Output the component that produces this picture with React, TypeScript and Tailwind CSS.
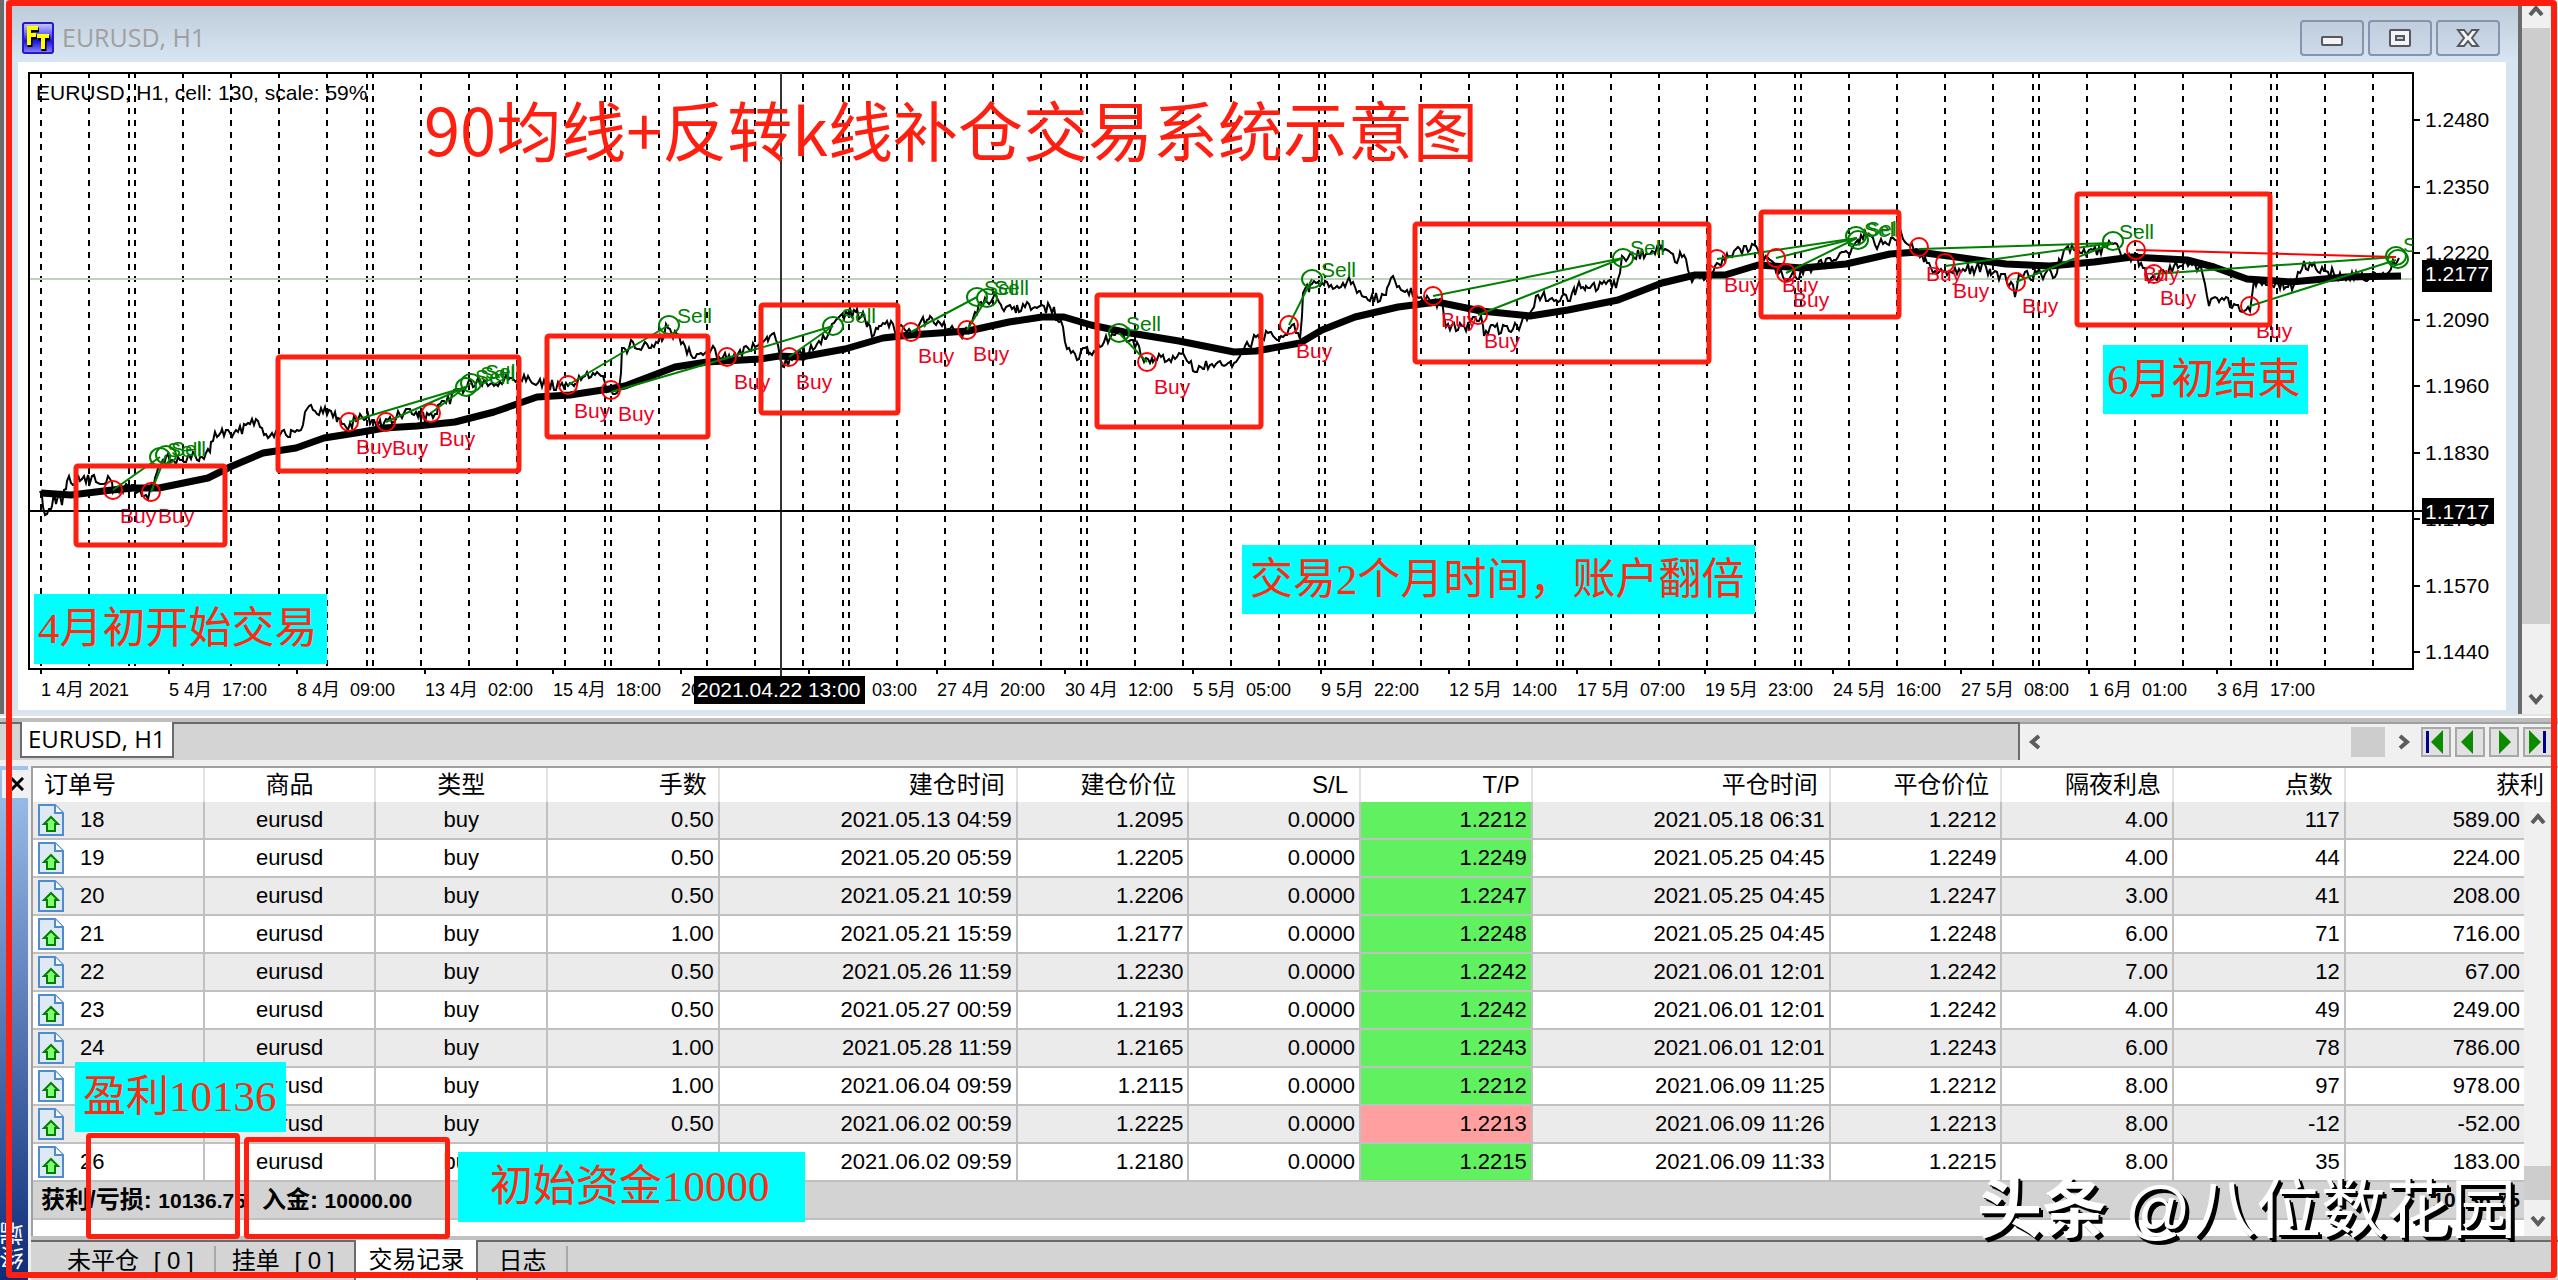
import type { ReactNode } from 'react';

type Point = [number, number];

const COLUMNS = [
  { label: '订单号', width: 'w-[6.8%]', align: 'text-left' },
  { label: '商品', width: 'w-[6.8%]', align: 'text-center' },
  { label: '类型', width: 'w-[6.8%]', align: 'text-center' },
  { label: '手数', width: 'w-[6.8%]', align: 'text-right' },
  { label: '建仓时间', width: 'w-[11.8%]', align: 'text-right' },
  { label: '建仓价位', width: 'w-[6.8%]', align: 'text-right' },
  { label: 'S/L', width: 'w-[6.8%]', align: 'text-right' },
  { label: 'T/P', width: 'w-[6.8%]', align: 'text-right' },
  { label: '平仓时间', width: 'w-[11.8%]', align: 'text-right' },
  { label: '平仓价位', width: 'w-[6.8%]', align: 'text-right' },
  { label: '隔夜利息', width: 'w-[6.8%]', align: 'text-right' },
  { label: '点数', width: 'w-[6.8%]', align: 'text-right' },
];

const ORDERS = [
  ['18', 'eurusd', 'buy', '0.50', '2021.05.13 04:59', '1.2095', '0.0000', '1.2212', '2021.05.18 06:31', '1.2212', '4.00', '117', '589.00'],
  ['19', 'eurusd', 'buy', '0.50', '2021.05.20 05:59', '1.2205', '0.0000', '1.2249', '2021.05.25 04:45', '1.2249', '4.00', '44', '224.00'],
  ['20', 'eurusd', 'buy', '0.50', '2021.05.21 10:59', '1.2206', '0.0000', '1.2247', '2021.05.25 04:45', '1.2247', '3.00', '41', '208.00'],
  ['21', 'eurusd', 'buy', '1.00', '2021.05.21 15:59', '1.2177', '0.0000', '1.2248', '2021.05.25 04:45', '1.2248', '6.00', '71', '716.00'],
  ['22', 'eurusd', 'buy', '0.50', '2021.05.26 11:59', '1.2230', '0.0000', '1.2242', '2021.06.01 12:01', '1.2242', '7.00', '12', '67.00'],
  ['23', 'eurusd', 'buy', '0.50', '2021.05.27 00:59', '1.2193', '0.0000', '1.2242', '2021.06.01 12:01', '1.2242', '4.00', '49', '249.00'],
  ['24', 'eurusd', 'buy', '1.00', '2021.05.28 11:59', '1.2165', '0.0000', '1.2243', '2021.06.01 12:01', '1.2243', '6.00', '78', '786.00'],
  ['27', 'eurusd', 'buy', '1.00', '2021.06.04 09:59', '1.2115', '0.0000', '1.2212', '2021.06.09 11:25', '1.2212', '8.00', '97', '978.00'],
  ['25', 'eurusd', 'buy', '0.50', '2021.06.02 00:59', '1.2225', '0.0000', '1.2213', '2021.06.09 11:26', '1.2213', '8.00', '-12', '-52.00'],
  ['26', 'eurusd', 'buy', '0.50', '2021.06.02 09:59', '1.2180', '0.0000', '1.2215', '2021.06.09 11:33', '1.2215', '8.00', '35', '183.00'],
];

const PRICE_LABELS = ['1.2480', '1.2350', '1.2220', '1.2090', '1.1960', '1.1830', '1.1700', '1.1570', '1.1440'];

const TIME_LABELS = [
  '1 4月 2021', '5 4月  17:00', '8 4月  09:00', '13 4月  02:00', '15 4月  18:00', '20 4月  11:00',
  '22 4月  03:00', '27 4月  20:00', '30 4月  12:00', '5 5月  05:00', '9 5月  22:00', '12 5月  14:00',
  '17 5月  07:00', '19 5月  23:00', '24 5月  16:00', '27 5月  08:00', '1 6月  01:00', '3 6月  17:00',
];

// One trading week is 238 wide, days inside it sit at these offsets
const DAY_OFFSETS = [0, 48, 96, 144, 192, 232];

const GRID_X = Array.from({ length: 11 }, (_, week) => DAY_OFFSETS.map((d) => -103 + week * 238 + d))
  .flat()
  .filter((x) => x > 30 && x < 2412);

const MOVING_AVERAGE: Point[] = [
  [41, 493], [71, 495], [112, 490], [134, 488], [159, 488], [208, 478], [230, 467], [263, 453], [296, 448], [324, 438],
  [362, 432], [384, 428], [417, 426], [455, 422], [494, 412], [537, 397], [570, 395], [609, 389], [625, 386], [675, 367],
  [707, 362], [760, 359], [779, 356], [801, 357], [845, 349], [883, 338], [910, 335], [968, 331], [1009, 322], [1042, 317],
  [1064, 317], [1091, 325], [1124, 332], [1179, 341], [1234, 352], [1256, 351], [1300, 343], [1322, 330], [1355, 317],
  [1398, 307], [1437, 302], [1481, 311], [1530, 316], [1568, 310], [1618, 300], [1662, 283], [1695, 275], [1725, 275],
  [1758, 265], [1802, 268], [1846, 264], [1890, 254], [1918, 252], [1956, 257], [2006, 264], [2050, 266], [2094, 262],
  [2132, 257], [2187, 260], [2214, 267], [2247, 279], [2291, 282], [2346, 277], [2401, 276],
];

const PRICE: Point[] = [
  [40, 490], [43, 507], [47, 512], [54, 498], [62, 500], [69, 481], [84, 479], [110, 481], [113, 490], [132, 486],
  [148, 498], [159, 467], [168, 458], [182, 461], [195, 457], [204, 459], [217, 433], [226, 432], [236, 435], [244, 426],
  [252, 417], [266, 434], [280, 431], [299, 435], [307, 408], [329, 412], [346, 426], [362, 416], [384, 425], [406, 412],
  [431, 418], [444, 405], [456, 392], [469, 384], [480, 382], [488, 388], [502, 380], [516, 377], [530, 376], [540, 384],
  [568, 388], [581, 376], [603, 378], [609, 391], [619, 388], [622, 353], [631, 345], [645, 347], [658, 345], [666, 328],
  [677, 337], [691, 353], [713, 350], [727, 358], [742, 353], [757, 345], [776, 336], [782, 362], [790, 361], [817, 347],
  [834, 326], [850, 313], [861, 314], [872, 332], [883, 321], [899, 328], [913, 331], [921, 321], [938, 320], [954, 333],
  [968, 333], [979, 307], [995, 294], [1006, 312], [1025, 305], [1050, 308], [1061, 322], [1067, 350], [1075, 357],
  [1085, 351], [1094, 353], [1108, 340], [1119, 333], [1135, 343], [1146, 363], [1157, 357], [1187, 358], [1195, 369],
  [1210, 366], [1234, 367], [1245, 347], [1256, 336], [1283, 337], [1294, 328], [1300, 336], [1303, 293], [1316, 283],
  [1333, 289], [1349, 281], [1368, 300], [1380, 297], [1393, 281], [1409, 290], [1431, 301], [1442, 303], [1446, 327],
  [1464, 328], [1481, 317], [1484, 332], [1497, 329], [1519, 327], [1538, 297], [1568, 299], [1579, 286], [1590, 289],
  [1618, 283], [1622, 258], [1640, 254], [1667, 248], [1675, 263], [1684, 252], [1692, 278], [1710, 277], [1717, 263],
  [1736, 250], [1756, 247], [1772, 263], [1783, 277], [1797, 276], [1813, 267], [1830, 260], [1852, 253], [1863, 235],
  [1877, 244], [1901, 236], [1918, 249], [1929, 267], [1945, 272], [1984, 267], [1997, 275], [2011, 282], [2015, 297],
  [2019, 277], [2055, 272], [2066, 250], [2105, 250], [2113, 241], [2121, 256], [2135, 257], [2151, 279], [2182, 264],
  [2201, 267], [2209, 302], [2228, 302], [2242, 312], [2250, 309], [2254, 282], [2294, 285], [2302, 265], [2324, 271],
  [2346, 277], [2385, 275], [2399, 258],
];

const BUY_MARKS: Point[] = [
  [113, 490], [151, 492], [349, 422], [386, 422], [431, 413], [568, 385], [611, 390], [727, 357], [789, 357], [911, 332],
  [967, 330], [1147, 362], [1289, 325], [1433, 296], [1478, 315], [1717, 259], [1776, 258], [1786, 273], [1919, 247],
  [1945, 263], [2016, 282], [2136, 250], [2154, 274], [2250, 306],
];

const SELL_MARKS: Point[] = [
  [160, 457], [166, 455], [466, 387], [471, 383], [669, 325], [833, 326], [977, 297], [987, 298], [1119, 333],
  [1312, 279], [1623, 258], [1856, 236], [1858, 240], [2113, 241], [2396, 256], [2398, 259],
];

const BUY_LABELS: Point[] = [
  [120, 523], [158, 523], [356, 454], [392, 455], [439, 446], [574, 418], [618, 421], [734, 389], [796, 389], [918, 363],
  [973, 361], [1154, 394], [1296, 358], [1441, 327], [1484, 348], [1724, 292], [1782, 292], [1793, 307], [1926, 281],
  [1953, 298], [2022, 313], [2143, 281], [2160, 305], [2256, 338],
];

const SELL_LABELS: Point[] = [
  [167, 457], [171, 456], [475, 384], [480, 381], [485, 379], [677, 323], [841, 323], [984, 295], [994, 295], [1126, 331],
  [1321, 277], [1630, 255], [1864, 237], [1866, 236], [2119, 239], [2403, 252],
];

const PROFIT_LINES: [Point, Point][] = [
  [[113, 490], [160, 457]], [[151, 492], [166, 455]], [[349, 422], [466, 387]], [[386, 422], [466, 387]],
  [[431, 413], [471, 383]], [[568, 385], [669, 325]], [[611, 392], [727, 358]], [[727, 358], [833, 326]],
  [[789, 357], [833, 326]], [[911, 332], [977, 297]], [[967, 330], [987, 298]], [[1119, 333], [1147, 362]],
  [[1289, 325], [1312, 279]], [[1433, 296], [1623, 258]], [[1478, 315], [1623, 258]], [[1717, 259], [1857, 238]],
  [[1776, 258], [1857, 238]], [[1786, 273], [1857, 238]], [[1919, 249], [2113, 243]], [[1945, 266], [2113, 243]],
  [[2016, 282], [2113, 243]], [[2154, 274], [2396, 257]], [[2250, 306], [2396, 260]],
];

const CHART_FRAMES = [
  [76, 466, 149, 79], [278, 357, 241, 114], [547, 336, 161, 101], [761, 305, 137, 108], [1097, 295, 164, 132],
  [1415, 224, 294, 138], [1761, 212, 138, 105], [2077, 194, 193, 131],
];

const CHART_NOTES = [
  { x: 34, y: 594, w: 293, h: 70, tx: 38, text: '4月初开始交易' },
  { x: 1242, y: 545, w: 513, h: 69, tx: 1250, text: '交易2个月时间，账户翻倍' },
  { x: 2103, y: 345, w: 205, h: 69, tx: 2107, text: '6月初结束' },
];

const toPath = (points: Point[]) => 'M' + points.map(([x, y]) => `${x} ${y}`).join('L');

// Adds candle noise between the turning points, same result on every render
function roughen(points: Point[]): Point[] {
  const out: Point[] = [];
  let seed = 7;
  for (let i = 0; i < points.length - 1; i++) {
    const [x0, y0] = points[i];
    const [x1, y1] = points[i + 1];
    const steps = Math.max(1, Math.round((x1 - x0) / 2));
    for (let s = 0; s < steps; s++) {
      seed = (seed * 1103515245 + 12345) % 2147483648;
      const noise = (seed / 2147483648 - 0.5) * 11;
      const t = s / steps;
      out.push([Math.round(x0 + (x1 - x0) * t), Math.round(y0 + (y1 - y0) * t + noise)]);
    }
  }
  out.push(points[points.length - 1]);
  return out;
}

const NOTE_FONT = "font-['Liberation_Serif','KaiTi','Noto_Sans_CJK_SC',serif]";

function Chevron({ dir }: { dir: 'up' | 'down' | 'left' | 'right' }) {
  const turn = { up: 0, right: 90, down: 180, left: 270 }[dir];
  return (
    <svg viewBox="0 0 16 16" className="size-4" aria-hidden="true">
      <path d="M2 11L8 4L14 11" fill="none" stroke="#5c5c5c" strokeWidth="4" transform={`rotate(${turn} 8 8)`} />
    </svg>
  );
}

function PriceChart() {
  return (
    <svg
      viewBox="18 62 2488 648"
      className="block h-auto w-full bg-white font-['Liberation_Sans','Noto_Sans_CJK_SC',sans-serif]"
      role="img"
      aria-label="EURUSD, H1"
    >
      <g stroke="#000" strokeWidth="2" strokeDasharray="6 6">
        {GRID_X.map((x) => (
          <line key={x} x1={x} x2={x} y1="72" y2="668" />
        ))}
      </g>
      <line x1="29" x2="2414" y1="279" y2="279" stroke="#bcd4bc" strokeWidth="2" />
      <path d="M29 669V73H2413V669Z" fill="none" stroke="#000" strokeWidth="2" />

      <path d={toPath(roughen(PRICE))} fill="none" stroke="#000" strokeWidth="2" />
      <path d={toPath(MOVING_AVERAGE)} fill="none" stroke="#000" strokeWidth="7" strokeLinejoin="round" />

      <g stroke="#008000" strokeWidth="2">
        {PROFIT_LINES.map(([a, b]) => (
          <line key={`${a}-${b}`} x1={a[0]} y1={a[1]} x2={b[0]} y2={b[1]} />
        ))}
      </g>
      <line x1="2136" y1="250" x2="2396" y2="257" stroke="#ff0000" strokeWidth="2" />

      <g fill="none" strokeWidth="2">
        {SELL_MARKS.map(([x, y]) => (
          <ellipse key={`${x}-${y}`} cx={x} cy={y} rx="10" ry="9" stroke="#008000" />
        ))}
        {BUY_MARKS.map(([x, y]) => (
          <ellipse key={`${x}-${y}`} cx={x} cy={y} rx="9" ry="9" stroke="#ff0000" />
        ))}
      </g>
      <clipPath id="plot">
        <rect x="29" y="73" width="2384" height="596" />
      </clipPath>
      <g clipPath="url(#plot)" className="text-[21px]">
        {SELL_LABELS.map(([x, y]) => (
          <text key={`${x}-${y}`} x={x} y={y} fill="#008000">Sell</text>
        ))}
        {BUY_LABELS.map(([x, y]) => (
          <text key={`${x}-${y}`} x={x} y={y} fill="#f00020">Buy</text>
        ))}
      </g>

      {/* crosshair */}
      <line x1="781" x2="781" y1="73" y2="676" stroke="#333" strokeWidth="2" />
      <line x1="29" x2="2422" y1="511" y2="511" stroke="#000" strokeWidth="2" />

      <text x="36" y="100" className="text-[21px]">EURUSD, H1, cell: 130, scale: 59%</text>

      {PRICE_LABELS.map((label, i) => {
        const y = Math.round(120 + i * 66.5);
        return (
          <g key={label} className="text-[21px]">
            <line x1="2414" x2="2420" y1={y} y2={y} stroke="#000" strokeWidth="2" />
            <text x="2425" y={y + 7}>{label}</text>
          </g>
        );
      })}
      {TIME_LABELS.map((label, i) => {
        const x = 41 + i * 128;
        return (
          <g key={label} className="text-[18px]">
            <line x1={x} x2={x} y1="669" y2="674" stroke="#000" strokeWidth="2" />
            <text x={x} y="696" className="whitespace-pre">{label}</text>
          </g>
        );
      })}

      <g className="text-[21px]">
        <rect x="2422" y="260" width="70" height="32" />
        <text x="2425" y="281" fill="#fff">1.2177</text>
        <rect x="2422" y="498" width="72" height="26" />
        <text x="2425" y="519" fill="#fff">1.1717</text>
        <rect x="694" y="676" width="171" height="28" />
        <text x="697" y="697" fill="#fff">2021.04.22 13:00</text>
      </g>

      <text x="424" y="156" fill="#ff1f10" className="font-['Noto_Sans_CJK_SC',sans-serif] text-[65px]">
        90均线+反转k线补仓交易系统示意图
      </text>

      {CHART_FRAMES.map(([x, y, w, h]) => (
        <rect key={x} x={x} y={y} width={w} height={h} rx="2" fill="none" stroke="#ff1f10" strokeWidth="5" />
      ))}
      {CHART_NOTES.map((note) => (
        <g key={note.text}>
          <rect x={note.x} y={note.y} width={note.w} height={note.h} fill="#00ffff" />
          <text x={note.tx} y={note.y + 49} fill="#ff2a10" className={`${NOTE_FONT} text-[43px]`}>
            {note.text}
          </text>
        </g>
      ))}
    </svg>
  );
}

function WindowButton({ label, children }: { label: string; children: ReactNode }) {
  return (
    <button
      type="button"
      aria-label={label}
      className="flex h-9 w-16 items-center justify-center rounded-sm border-2 border-[#8494ae] bg-linear-to-b from-[#bfcddd] to-[#cddaea]"
    >
      <svg viewBox="0 0 24 20" className="h-5 w-6" stroke="#55595f" strokeWidth="2" fill="#f4f4f4">
        {children}
      </svg>
    </button>
  );
}

function ChartWindow() {
  return (
    <section className="min-w-0 flex-1 bg-[#d8e5f1] pr-3 pb-1 pl-1.5">
      <header className="-mr-3 -ml-1.5 flex h-[62px] items-center bg-linear-to-b from-[#bccad8] to-[#d8e5f2] pt-3.5 pr-[18px] pl-2.5">
        <svg viewBox="0 0 32 32" className="size-8" aria-hidden="true">
          <defs>
            <linearGradient id="logo" x1="0" x2="0" y1="0" y2="1">
              <stop offset="0" stopColor="#d0d0ff" />
              <stop offset="0.35" stopColor="#6a68ff" />
              <stop offset="0.6" stopColor="#1c10e0" />
              <stop offset="1" stopColor="#8a88ff" />
            </linearGradient>
          </defs>
          <rect x="1" y="1" width="30" height="30" rx="2" fill="url(#logo)" stroke="#2a18c8" strokeWidth="2" />
          <path d="M8 25V8H17M8 15H15M16 16H28M22 16V29" fill="none" stroke="#000" strokeWidth="5" />
          <path d="M7 23V6H16M7 13H14M15 14H27M21 14V27" fill="none" stroke="#ffff00" strokeWidth="4" />
        </svg>
        <h1 className="ml-2 flex-1 font-['Open_Sans',sans-serif] text-[25px] text-[#a0a0a0]">EURUSD, H1</h1>
        <div className="flex gap-1">
          <WindowButton label="最小化">
            <rect x="2" y="9" width="20" height="8" rx="1" />
          </WindowButton>
          <WindowButton label="最大化">
            <rect x="2" y="2" width="20" height="16" rx="1" />
            <rect x="8" y="8" width="8" height="4" fill="#c4d2e2" />
          </WindowButton>
          <WindowButton label="关闭">
            <path d="M2 2H8L12 7L16 2H22L16 10L22 18H16L12 13L8 18H2L8 10Z" />
          </WindowButton>
        </div>
      </header>
      <PriceChart />
    </section>
  );
}

function TabBar() {
  return (
    <div className="flex h-[38px] bg-[#f0f0f0]">
      <div className="flex flex-1 items-start border-t-2 border-r-2 border-[#6b6b6b] bg-[#d4d4d4] pl-5">
        <button
          type="button"
          className="-mt-0.5 h-9 border-x-2 border-b-2 border-[#6b6b6b] bg-white px-1.5 font-['Open_Sans',sans-serif] text-2xl leading-8"
        >
          EURUSD, H1
        </button>
      </div>
      <div className="flex w-[538px] items-center border-t-2 border-[#a0a0a0]">
        <div className="flex w-[401px] items-center">
          <button type="button" aria-label="向左滚动" className="flex w-8 justify-center"><Chevron dir="left" /></button>
          <div className="flex h-[30px] flex-1 justify-end"><div className="h-full w-[34px] bg-[#cdcdcd]" /></div>
          <button type="button" aria-label="向右滚动" className="flex w-9 justify-center"><Chevron dir="right" /></button>
        </div>
        <div className="flex gap-1">
          <NavButton label="第一页" arrow="M22 3V27L10 15Z" bar={6} />
          <NavButton label="上一页" arrow="M18 3V27L6 15Z" />
          <NavButton label="下一页" arrow="M10 3V27L22 15Z" />
          <NavButton label="最后一页" arrow="M6 3V27L18 15Z" bar={21} />
        </div>
      </div>
    </div>
  );
}

function NavButton({ label, arrow, bar }: { label: string; arrow: string; bar?: number }) {
  return (
    <button type="button" aria-label={label} className="h-[30px] w-[30px] border-2 border-[#a8a8a8] bg-[#e1e1e1]">
      <svg viewBox="2 2 26 26" className="size-full">
        <path d={arrow} fill="#0c8a00" />
        {bar !== undefined && <rect x={bar - 1} y="4" width="3" height="22" fill="#000088" />}
      </svg>
    </button>
  );
}

function OrderIcon() {
  return (
    <svg viewBox="0 0 26 32" className="h-8 w-[26px]" aria-hidden="true">
      <path d="M1 1H17L25 9V31H1Z" fill="#dfe9f6" stroke="#4f8ccb" strokeWidth="2" />
      <path d="M17 1V9H25" fill="#fff" stroke="#4f8ccb" strokeWidth="2" />
      <path d="M13 13L20 20H17V27H9V20H6Z" fill="#80ff70" stroke="#008000" strokeWidth="2" />
    </svg>
  );
}

function OrderTable() {
  return (
    <table className="w-full table-fixed border-separate border-spacing-0 border-t-2 border-l-2 border-[#a0a0a0] text-[22px] leading-8">
      <colgroup>
        {COLUMNS.map((col) => (
          <col key={col.label} className={col.width} />
        ))}
        <col />
        <col className="w-[34px]" />
      </colgroup>
      <thead>
        <tr className="text-2xl">
          {COLUMNS.map((col) => (
            <th key={col.label} className={`${col.align} h-[34px] border-r-2 border-[#e2e2e2] bg-white px-[11px] py-0 font-normal`}>
              {col.label}
            </th>
          ))}
          <th colSpan={2} className="h-[34px] bg-white py-0 pr-[14px] text-right font-normal">获利</th>
        </tr>
      </thead>
      <tbody>
        {ORDERS.map((order, row) => (
          <tr key={order[0]} className={row % 2 === 0 ? 'bg-[#ebebeb]' : 'bg-white'}>
            {order.map((value, i) => {
              const align = COLUMNS[i]?.align ?? 'text-right';
              const edge = i === 12 ? '' : 'border-r-2';
              const tone = i !== 7 ? '' : value === '1.2213' ? 'bg-[#ff9f9f]' : 'bg-[#60f060]';
              return (
                <td key={i} className={`h-[38px] border-b-2 border-[#c0c0c0] px-1 py-0 whitespace-nowrap ${align} ${edge} ${tone}`}>
                  {i === 0 ? (
                    <span className="flex items-center gap-4 pl-px"><OrderIcon />{value}</span>
                  ) : (
                    value
                  )}
                </td>
              );
            })}
            {row === 0 && (
              <td rowSpan={12} className="h-px bg-[#f0f0f0] py-0 pr-1.5 pl-0">
                <div className="flex h-full flex-col items-center pt-2.5 pb-2">
                  <button type="button" aria-label="向上滚动" className="flex h-6"><Chevron dir="up" /></button>
                  <div className="flex w-full flex-1 flex-col justify-end pb-1"><div className="h-[34px] bg-[#cdcdcd]" /></div>
                  <button type="button" aria-label="向下滚动" className="flex h-6 items-end"><Chevron dir="down" /></button>
                </div>
              </td>
            )}
          </tr>
        ))}
        <tr className="bg-[#d3d3d3] text-[21px] font-bold">
          <td colSpan={11} className="h-[38px] border-b-2 border-[#c0c0c0] px-2 py-0">
            <span className="flex items-center gap-4 whitespace-nowrap">
              <span><span className="text-2xl">获利/亏损: </span>10136.75</span>
              <span><span className="text-2xl">入金: </span>10000.00</span>
            </span>
          </td>
          <td colSpan={2} className="h-[38px] border-b-2 border-[#c0c0c0] px-1 py-0 text-right">10136.75</td>
        </tr>
        <tr>
          <td colSpan={13} className="h-4 bg-white p-0" />
        </tr>
      </tbody>
    </table>
  );
}

function Terminal() {
  return (
    <section className="flex">
      <aside className="flex w-[31px] shrink-0 flex-col justify-between border-r-[3px] border-[#f0f0f0] bg-linear-to-b from-[#a0c4ee] via-[#5878b4] to-[#0c2c78] pt-1 pb-2.5">
        <button type="button" aria-label="关闭" className="ml-0.5 flex h-7 items-center justify-end bg-[#f0f0f0] pr-1">
          <svg viewBox="0 0 14 14" className="size-3.5" stroke="#000" strokeWidth="3"><path d="M1 1L13 13M13 1L1 13" /></svg>
        </button>
        <span className="rotate-180 text-2xl leading-7 text-white [writing-mode:vertical-rl]">终端</span>
      </aside>
      <div className="min-w-0 flex-1">
        <OrderTable />
        <div className="h-1 bg-[#c0c0c0]" />
        <nav className="flex h-10 border-t-2 border-[#6b6b6b] bg-[#d4d4d4] text-2xl leading-9 whitespace-nowrap">
          <button type="button" className="pr-5 pl-9">未平仓 <span className="ml-2">[ 0 ]</span></button>
          <span className="mt-1 h-7 w-0.5 bg-[#a8a8a8]" />
          <button type="button" className="pr-5 pl-4">挂单 <span className="ml-2">[ 0 ]</span></button>
          <button type="button" className="-mt-0.5 border-x-2 border-[#6b6b6b] bg-white px-3">交易记录</button>
          <button type="button" className="px-5">日志</button>
          <span className="mt-1 h-7 w-0.5 bg-[#a8a8a8]" />
        </nav>
      </div>
    </section>
  );
}

export default function App() {
  return (
    <main className="relative overflow-hidden bg-[#f0f0f0] font-['Liberation_Sans','Noto_Sans_CJK_SC',sans-serif] text-black">
      <div className="flex">
        <div className="w-3 border-l-4 border-[#6b6b6b] bg-[#d8e5f1]" />
        <ChartWindow />
        <div className="flex w-10 flex-col items-center border-l-4 border-[#6b6b6b] bg-[#f0f0f0] pr-2">
          <button type="button" aria-label="向上滚动" className="flex h-7 items-end pb-2"><Chevron dir="up" /></button>
          <div className="h-[596px] w-full bg-[#cdcdcd]" />
          <button type="button" aria-label="向下滚动" className="mt-auto mb-2 flex"><Chevron dir="down" /></button>
        </div>
      </div>
      <div className="h-2 border-t-2 border-b-4 border-t-[#e4e4e4] border-b-[#bdbdbd] bg-white" />
      <TabBar />
      <div className="h-1.5" />
      <Terminal />

      {/* marks drawn over the terminal */}
      <div className="absolute top-[1062px] left-[75px] h-[70px] w-[211px] bg-[#00ffff]">
        <p className={`${NOTE_FONT} pl-2 text-[43px] leading-[70px] whitespace-nowrap text-[#ff2a10]`}>盈利10136</p>
      </div>
      <div className="absolute top-[1152px] left-[458px] h-[70px] w-[347px] bg-[#00ffff]">
        <p className={`${NOTE_FONT} pl-8 text-[43px] leading-[70px] whitespace-nowrap text-[#ff2a10]`}>初始资金10000</p>
      </div>
      <div className="absolute top-[1133px] left-[86px] h-[106px] w-[154px] rounded border-[5px] border-[#ff1f10]" />
      <div className="absolute top-[1137px] left-[244px] h-[102px] w-[206px] rounded border-[5px] border-[#ff1f10]" />
      <p className="absolute right-[42px] bottom-[26px] text-[65px] leading-[88px] whitespace-nowrap text-white [text-shadow:2px_2px_0_#000,4px_4px_0_#000]">
        <span className="font-bold">头条</span> @八位数花园
      </p>
      <div className="pointer-events-none absolute top-0 right-px bottom-0.5 left-1.5 rounded border-6 border-[#ff1f10]" />
    </main>
  );
}
